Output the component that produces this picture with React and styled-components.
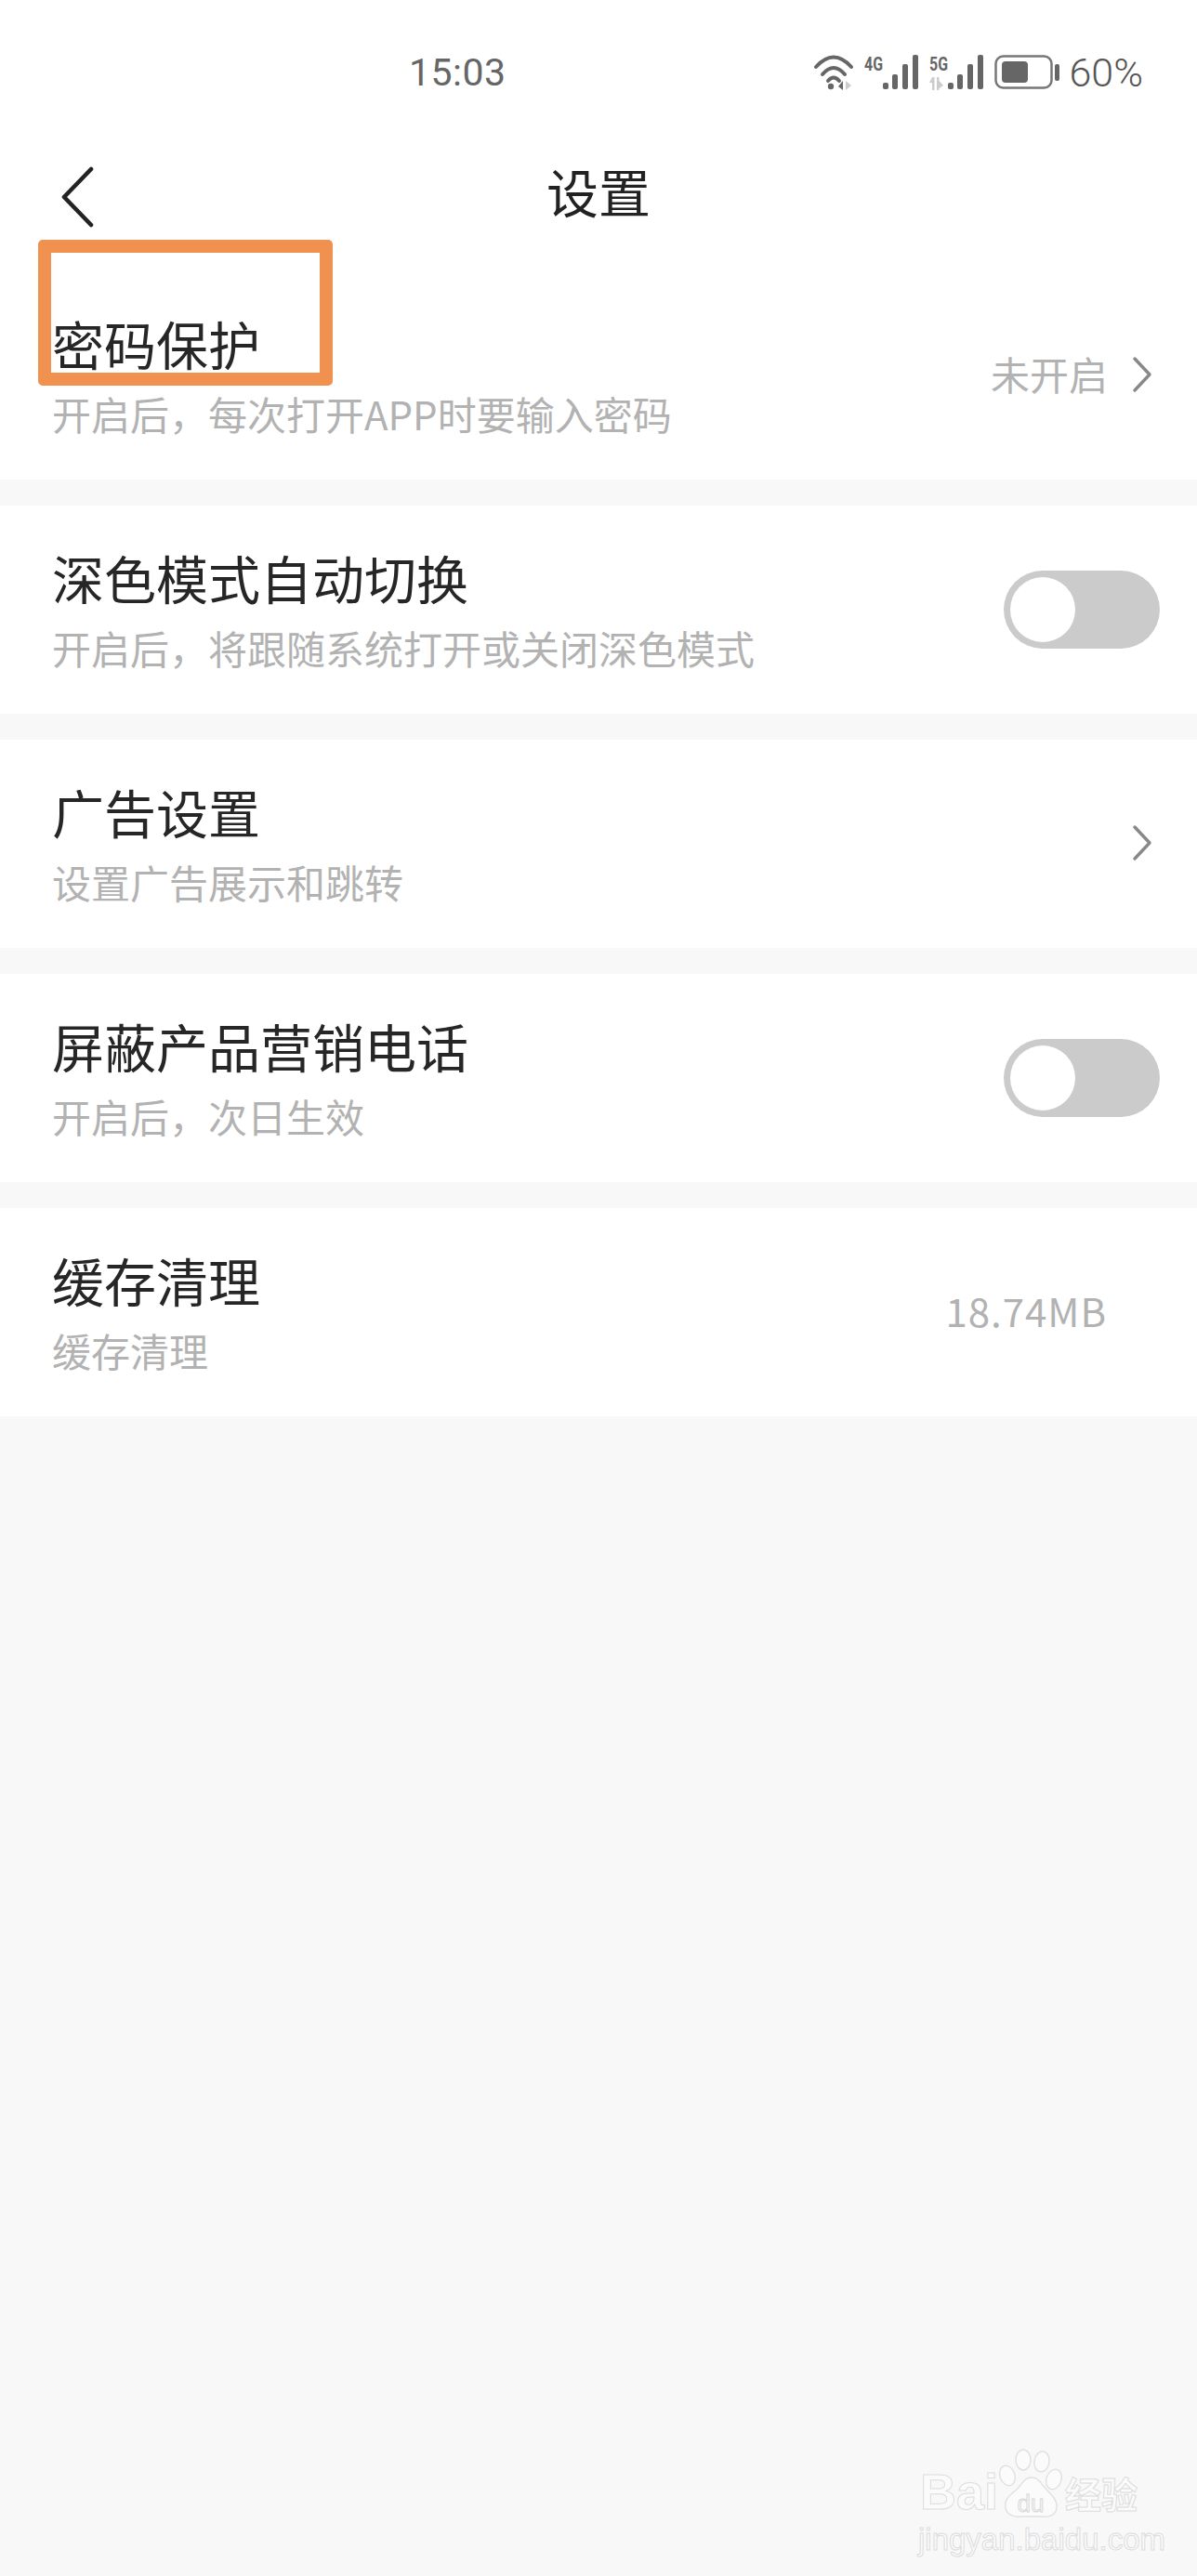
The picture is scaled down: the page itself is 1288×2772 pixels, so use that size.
import React from "react";
import styled, { createGlobalStyle } from "styled-components";

const GlobalStyle = createGlobalStyle`
  html, body {
    margin: 0;
    padding: 0;
    background: #f8f8f8;
  }
`;

const rows = [
  { title: "密码保护", sub: "开启后，每次打开APP时要输入密码", value: "未开启", arrow: true },
  { title: "深色模式自动切换", sub: "开启后，将跟随系统打开或关闭深色模式", toggle: true },
  { title: "广告设置", sub: "设置广告展示和跳转", arrow: true },
  { title: "屏蔽产品营销电话", sub: "开启后，次日生效", toggle: true },
  { title: "缓存清理", sub: "缓存清理", value: "18.74MB", cache: true },
];

function WifiIcon() {
  return (
    <svg width="44" height="38" viewBox="0 0 44 38">
      <g fill="none" stroke="#666" strokeWidth="4" strokeLinecap="round">
        <path d="M3 13 Q22 -8 41 13" />
        <path d="M10 21 Q22 7 34 21" />
        <path d="M16 28 Q22 21 28 28" />
      </g>
      <circle cx="19" cy="34" r="3.2" fill="#666" />
      <path d="M27 34 L32 28 V38 H32 Z" fill="#666" />
      <path d="M35 28 L41 33 L35 38 Z" fill="#ccc" />
    </svg>
  );
}

function SignalIcon({ label, arrows }) {
  return (
    <SignalSvg width="59" height="44" viewBox="0 -6 59 44">
      <text
        x="0"
        y="17"
        fontFamily="Roboto, sans-serif"
        fontSize="21"
        fontWeight="700"
        fill="#666"
        textLength="20"
        lengthAdjust="spacingAndGlyphs"
      >
        {label}
      </text>
      {arrows && (
        <g fill="#ccc">
          <path d="M3 24 H5.5 V38 H3 Z M3 24 L0 30 H3 Z" />
          <path d="M8 24 H10.5 V38 H8 Z M10.5 28 L15 33 L10.5 36 Z" />
        </g>
      )}
      <rect x="20" y="30" width="6" height="7" rx="2" fill="#666" />
      <rect x="30" y="21" width="6" height="16" rx="2" fill="#666" />
      <rect x="41" y="10" width="6" height="27" rx="2" fill="#666" />
      <rect x="52" y="0" width="6" height="37" rx="2" fill="#666" />
    </SignalSvg>
  );
}

function BatteryIcon() {
  return (
    <svg width="70" height="38" viewBox="0 0 70 38">
      <rect x="1.5" y="1.5" width="60" height="34" rx="8" fill="none" stroke="#777" strokeWidth="2.5" />
      <rect x="8" y="7" width="28" height="23" rx="4" fill="#666" />
      <rect x="65" y="10" width="5" height="18" rx="2" fill="#666" />
    </svg>
  );
}

function Chevron() {
  return (
    <svg width="24" height="40" viewBox="0 0 24 40">
      <path d="M4 3 L20 20 L4 37" fill="none" stroke="#888" strokeWidth="3.4" strokeLinecap="round" strokeLinejoin="round" />
    </svg>
  );
}

function BackIcon() {
  return (
    <svg width="40" height="66" viewBox="0 0 40 66">
      <path d="M34 3 L5 33 L34 63" fill="none" stroke="#222" strokeWidth="4.6" strokeLinecap="round" strokeLinejoin="round" />
    </svg>
  );
}

function PawIcon() {
  return (
    <svg width="72" height="76" viewBox="0 0 72 76">
      <g fill="#fbfbfb" stroke="#e0e0e0" strokeWidth="1.4">
        <ellipse cx="10" cy="29" rx="8" ry="11" transform="rotate(-20 10 29)" />
        <ellipse cx="27" cy="12" rx="8" ry="11" />
        <ellipse cx="47" cy="14" rx="8" ry="11" transform="rotate(10 47 14)" />
        <ellipse cx="60" cy="33" rx="8" ry="11" transform="rotate(20 60 33)" />
        <path d="M36 31 C28 31 26 38 20 44 C12 50 6 56 8 64 C10 72 18 74 26 73 L46 73 C54 74 62 72 63 64 C64 56 58 50 52 44 C46 38 44 31 36 31 Z" />
      </g>
      <text x="35" y="68" textAnchor="middle" fontFamily="Liberation Sans, sans-serif" fontSize="26" fill="#f4f4f4" stroke="#d4d4d4" strokeWidth="0.8">
        du
      </text>
    </svg>
  );
}

export default function App() {
  return (
    <Page>
      <GlobalStyle />
      <StatusBar>
        <Time>15:03</Time>
        <StatusIcons>
          <WifiIcon />
          <SignalIcon label="4G" />
          <SignalIcon label="5G" arrows />
          <BatteryIcon />
          <Percent>60%</Percent>
        </StatusIcons>
      </StatusBar>
      <NavBar>
        <BackButton>
          <BackIcon />
        </BackButton>
        <NavTitle>设置</NavTitle>
      </NavBar>
      <List>
        {rows.map((row) => (
          <Row key={row.title}>
            <RowText>
              <RowTitle>{row.title}</RowTitle>
              <RowSub>{row.sub}</RowSub>
            </RowText>
            <RowRight>
              {row.value && <RowValue $cache={row.cache}>{row.value}</RowValue>}
              {row.arrow && (
                <ChevronWrap>
                  <Chevron />
                </ChevronWrap>
              )}
              {row.toggle && (
                <Toggle>
                  <Knob />
                </Toggle>
              )}
            </RowRight>
          </Row>
        ))}
      </List>
      <Highlight />
      <Watermark>
        <BrandLine>
          <BrandText>Bai</BrandText>
          <PawIcon />
          <BrandCn>经验</BrandCn>
        </BrandLine>
        <BrandUrl>jingyan.baidu.com</BrandUrl>
      </Watermark>
    </Page>
  );
}

const Page = styled.div`
  position: relative;
  width: 1288px;
  height: 2772px;
  overflow: hidden;
  background: #f8f8f8;
  font-family: "Noto Sans CJK SC", "Noto Sans", sans-serif;
`;

const StatusBar = styled.div`
  display: flex;
  align-items: center;
  height: 156px;
  box-sizing: border-box;
  padding: 0 58px 0 440px;
  background: #fff;
`;

const Time = styled.span`
  font-family: Roboto, sans-serif;
  font-size: 41px;
  color: #666;
  letter-spacing: 0.5px;
`;

const StatusIcons = styled.div`
  display: flex;
  align-items: center;
  gap: 11px;
  margin-left: auto;
`;

const SignalSvg = styled.svg`
  margin-top: -6px;
`;

const Percent = styled.span`
  font-family: Roboto, sans-serif;
  font-size: 43px;
  font-weight: 300;
  color: #555;
`;

const NavBar = styled.div`
  position: relative;
  display: flex;
  justify-content: center;
  height: 136px;
  background: #fff;
`;

const BackButton = styled.div`
  position: absolute;
  left: 64px;
  top: 23px;
  height: 66px;
`;

const NavTitle = styled.div`
  margin-top: 9px;
  font-size: 56px;
  line-height: 80px;
  color: #222;
`;

const List = styled.div`
  display: flex;
  flex-direction: column;
  gap: 28px;
`;

const Row = styled.div`
  display: flex;
  align-items: center;
  justify-content: space-between;
  height: 224px;
  box-sizing: border-box;
  padding: 0 40px 0 56px;
  background: #fff;
`;

const RowText = styled.div`
  display: flex;
  flex-direction: column;
  padding-top: 5px;
`;

const RowTitle = styled.div`
  font-size: 56px;
  line-height: 76px;
  color: #262626;
`;

const RowSub = styled.div`
  font-size: 42px;
  line-height: 76px;
  color: #b2b2b2;
`;

const RowRight = styled.div`
  display: flex;
  align-items: center;
  gap: 25px;
`;

const RowValue = styled.span`
  font-size: 42px;
  letter-spacing: ${(p) => (p.$cache ? "1px" : "0")};
  color: #b2b2b2;
  padding-bottom: 6px;
  margin-right: ${(p) => (p.$cache ? "57px" : "0")};
`;

const ChevronWrap = styled.div`
  display: flex;
  margin: 0 7px 3px 0;
`;

const Toggle = styled.div`
  display: flex;
  align-items: center;
  width: 168px;
  height: 84px;
  box-sizing: border-box;
  padding: 7px;
  border-radius: 42px;
  background: #cbcbcb;
`;

const Knob = styled.div`
  width: 70px;
  height: 70px;
  border-radius: 50%;
  background: #fff;
`;

const Highlight = styled.div`
  position: absolute;
  left: 41px;
  top: 258px;
  width: 317px;
  height: 157px;
  box-sizing: border-box;
  border: solid #f0914f;
  border-width: 14px;
  border-radius: 5px;
`;

const Watermark = styled.div`
  position: absolute;
  left: 988px;
  top: 2635px;
  display: flex;
  flex-direction: column;
  align-items: flex-start;
`;

const BrandLine = styled.div`
  display: flex;
  align-items: flex-end;
  height: 76px;
  padding-left: 2px;
`;

const outline = `
  -webkit-text-stroke: 1px #dcdcdc;
  color: #fbfbfb;
`;

const BrandText = styled.span`
  ${outline}
  font-family: "Liberation Sans", sans-serif;
  font-size: 54px;
  font-weight: 700;
  line-height: 60px;
`;

const BrandCn = styled.span`
  ${outline}
  font-size: 39px;
  font-weight: 700;
  line-height: 58px;
`;

const BrandUrl = styled.div`
  ${outline}
  font-family: "Liberation Sans", sans-serif;
  font-size: 33px;
  line-height: 36px;
  margin-top: 4px;
`;
